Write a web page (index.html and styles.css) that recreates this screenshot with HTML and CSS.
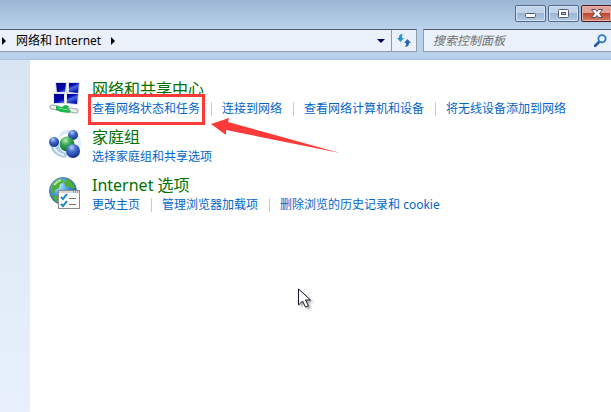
FILE: index.html
```html
<!DOCTYPE html>
<html lang="zh-CN">
<head>
<meta charset="utf-8">
<title>网络和 Internet</title>
<link rel="stylesheet" href="styles.css">
</head>
<body>
<div class="window">
  <header class="frame">
    <div class="titlebar">
      <button class="caption" type="button" aria-label="最小化">
        <svg width="29" height="15" viewBox="0 0 29 15"><rect x="9.500" y="7.500" width="10" height="4" rx="1" fill="#fff" stroke="#555b6b"/></svg>
      </button>
      <button class="caption" type="button" aria-label="最大化">
        <svg width="29" height="15" viewBox="0 0 29 15"><rect x="9.500" y="3.500" width="10" height="8" rx="1" fill="#fff" stroke="#555b6b"/><rect x="12.500" y="6.500" width="4" height="2" fill="#a6bfdc" stroke="#555b6b"/></svg>
      </button>
      <button class="caption close" type="button" aria-label="关闭">
        <svg width="29" height="15" viewBox="0 0 29 15"><path d="M9.500 3.500h4l1.500 2 1.500-2h4l-3 4 3 4h-4l-1.500-2-1.500 2h-4l3-4z" fill="#fff" stroke="#5a4a5c"/></svg>
      </button>
    </div>
    <div class="toolbar">
      <nav class="address">
        <svg class="tri" width="4" height="8" viewBox="0 0 4 8"><path d="M0 0l4 4-4 4z"/></svg>
        <a class="crumb" href="#">网络和 Internet</a>
        <svg class="tri" width="4" height="8" viewBox="0 0 4 8"><path d="M0 0l4 4-4 4z"/></svg>
        <button class="tool drop" type="button" aria-label="以前的位置">
          <svg width="8" height="4" viewBox="0 0 8 4"><path d="M0 0h8L4 4z" fill="#00005a"/></svg>
        </button>
        <button class="tool refresh" type="button" aria-label="刷新">
          <svg width="14" height="13" viewBox="0 0 14 13"><path d="M6 0C3 0 2 1 2 4H0l3.500 4L7 4H5c0-2 0-3 1-4z" fill="#2496d2"/><path d="M8 13c3 0 4-2 4-4h2l-3.500-4L7 9h2c0 2 0 3-1 4z" fill="#2c64b2"/></svg>
        </button>
      </nav>
      <div class="search">
        <input type="text" placeholder="搜索控制面板" aria-label="搜索控制面板">
        <button class="tool find" type="button" aria-label="搜索">
          <svg width="13" height="13" viewBox="0 0 13 13" fill="none"><path d="M1 12l4-4" stroke="#24579f" stroke-width="2.500" stroke-linecap="round"/><circle cx="8" cy="4.800" r="3.600" fill="#eaf6ff" stroke="#2b78cb" stroke-width="1.800"/></svg>
        </button>
      </div>
    </div>
  </header>
  <div class="body">
    <aside class="sidebar"></aside>
    <main class="content">
      <section class="category">
        <svg class="icon" width="34" height="36" viewBox="0 0 34 36">
          <defs><linearGradient id="screen" x1="0" y1="0" x2="1" y2="1"><stop offset="0" stop-color="#00008c"/><stop offset=".45" stop-color="#0404b4"/><stop offset=".6" stop-color="#4468e0"/><stop offset=".85" stop-color="#0c1cb0"/><stop offset="1" stop-color="#060f98"/></linearGradient></defs>
          <path d="M7 3h12v11l-11 1zM20 3h12l-1 12H19zM5 14l12 0v11H6zM18 14h13l-1 12-12-1z" fill="#dde0e6"/>
          <path d="M8 4h10l-1 9-8 0zM21 4h10l-1 10-9-1z" fill="url(#screen)"/>
          <path d="M6 15l10 0v9H6zM19 15h11l-1 10-10-1z" fill="url(#screen)"/>
          <path d="M4 28l6 1M22 31l6 1" stroke="#a0a6a6" stroke-width="5" stroke-linecap="round"/>
          <path d="M4 28l6 1M23 31l5 1" stroke="#eceeee" stroke-width="3" stroke-linecap="round"/>
          <path d="M8 27l6 1 3-2 4 1-1 3 3 2-2 2-8-1-5-2z" fill="#17b64a"/><path d="M10 29l10 2" stroke="#7be097"/>
        </svg>
        <div class="text">
          <h2>网络和共享中心</h2>
          <ul class="links">
            <li><a class="marked" href="#">查看网络状态和任务<svg class="pointer" width="130" height="35" viewBox="0 0 130 35"><path d="M1 6L19 0l-1 4L130 35 16 12v5z" fill="#fc3a38"/></svg></a></li>
            <li><a href="#">连接到网络</a></li>
            <li><a href="#">查看网络计算机和设备</a></li>
            <li><a href="#">将无线设备添加到网络</a></li>
          </ul>
        </div>
      </section>
      <section class="category">
        <svg class="icon" width="34" height="34" viewBox="0 0 34 34">
          <defs>
            <radialGradient id="blue" cx=".4" cy=".25" r=".75"><stop offset="0" stop-color="#b7d2fa"/><stop offset=".4" stop-color="#4770cd"/><stop offset="1" stop-color="#102d8e"/></radialGradient>
            <radialGradient id="green" cx=".4" cy=".25" r=".75"><stop offset="0" stop-color="#b8efb5"/><stop offset=".45" stop-color="#36a450"/><stop offset="1" stop-color="#087129"/></radialGradient>
          </defs>
          <path d="M11 9C13 4 17 2 22 3l-2 4C16 7 13 8 12 12zM29 7c5 5 5 11 2 16l-3-3c2-3 3-6 0-11z" fill="#dcecf8"/>
          <path d="M2 17c1 8 7 13 16 14l1-5c-6-1-8-5-9-12z" fill="#a9cbe8"/><path d="M6 20c2 5 5 7 10 8" stroke="#e6f4ff" stroke-width="2" fill="none"/>
          <circle cx="6" cy="15" r="5" fill="url(#blue)"/><circle cx="25" cy="8" r="5" fill="url(#blue)"/>
          <circle cx="19" cy="17" r="7.500" fill="url(#green)"/><circle cx="25" cy="24" r="7" fill="url(#blue)"/>
        </svg>
        <div class="text">
          <h2>家庭组</h2>
          <ul class="links">
            <li><a href="#">选择家庭组和共享选项</a></li>
          </ul>
        </div>
      </section>
      <section class="category">
        <svg class="icon" width="34" height="34" viewBox="0 0 34 34">
          <defs><radialGradient id="sea" cx=".35" cy=".3" r=".75"><stop offset="0" stop-color="#b9e7ff"/><stop offset=".5" stop-color="#3c93d8"/><stop offset="1" stop-color="#164a9c"/></radialGradient></defs>
          <circle cx="15" cy="16" r="13.500" fill="url(#sea)" stroke="#527f9e"/>
          <path d="M4 11C6 6 10 4 14 4l2 3-4 2-1 4-4 2-1 4-3-2zM18 4c5 1 8 5 9 9l-3 1-3-3-3 1-2-4zM4 20l6 1 3 4-2 3c-4-1-6-5-7-8z" fill="#4fae35"/>
          <path d="M6 10c2-3 4-4 7-5" stroke="#bbe99a" stroke-width="2" fill="none"/>
          <rect x="10.500" y="15.500" width="21" height="18" fill="#fbfbfc" stroke="#8c8c90"/>
          <path d="M11 17h20" stroke="#d6d8dc" stroke-width="2"/><path d="M25 17h1M27 17h1M29 17h1" stroke="#666"/>
          <path d="M13 22l2 2 4-5M13 29l2 2 4-5" fill="none" stroke="#1786c8" stroke-width="2"/>
          <path d="M21 23.500h7M21 29.500h7" stroke="#77777c"/>
        </svg>
        <div class="text">
          <h2>Internet 选项</h2>
          <ul class="links">
            <li><a href="#">更改主页</a></li>
            <li><a href="#">管理浏览器加载项</a></li>
            <li><a href="#">删除浏览的历史记录和 cookie</a></li>
          </ul>
        </div>
      </section>
    </main>
  </div>
  <svg class="cursor" width="17" height="22" viewBox="0 0 17 22"><path d="M1.500 1v16l4-4 3 6 3-1-3-6h5z" fill="#fff" stroke="#14172c"/></svg>
</div>
</body>
</html>
```

FILE: styles.css
```css
* {
  box-sizing: border-box;
}

body {
  margin: 0;
  font-family: "Noto Sans", "Noto Sans CJK SC", sans-serif;
  font-size: 12px;
  line-height: 18px;
  color: #000;
}

svg {
  display: block;
  flex: none;
}

button {
  margin: 0;
  padding: 0;
  border: 0;
  background: none;
}

a {
  color: #0066cc;
  text-decoration: none;
}

.window {
  position: relative;
  display: flex;
  flex-direction: column;
  min-height: 100vh;
  overflow: hidden;
}

.frame {
  padding-bottom: 7px;
  border-bottom: 1px solid #a5c0df;
  background: linear-gradient(#9cb7d5, #b9d1ea 28px, #b9d1ea);
}

.titlebar {
  display: flex;
  justify-content: flex-end;
  gap: 2px;
  height: 29px;
  padding-top: 5px;
}

.caption {
  width: 31px;
  height: 17px;
  border: 1px solid #52698a;
  border-radius: 2px;
  background: linear-gradient(#c0d3e9 50%, #9bb5d3 50%, #b4cce6);
  box-shadow: inset 0 0 0 1px #d5e4f4;
}

.close {
  margin-right: -1px;
  border-color: #4c1722;
  background: linear-gradient(#e0a298 45%, #bd3f2b 45%, #d58069);
  box-shadow: inset 0 0 0 1px #e8b2a8;
}

.toolbar {
  display: flex;
  gap: 6px;
}

.address,
.search {
  display: flex;
  align-items: center;
  height: 23px;
  border: 1px solid #8d9bab;
  border-top-color: #555e69;
  background: #eaf1fa;
}

.address {
  flex: 1;
  gap: 10px;
  padding-left: 2px;
  border-left: 0;
}

.crumb {
  color: #000;
}

.tool {
  display: flex;
  align-items: center;
  justify-content: center;
  align-self: stretch;
}

.drop {
  width: 20px;
  margin-left: auto;
}

.refresh {
  width: 25px;
  margin-left: -10px;
  border-left: 1px solid #8d9bab;
}

.search {
  flex: none;
  width: 188px;
  padding: 0 4px 0 9px;
  border-right: 0;
}

.search input {
  flex: 1;
  width: 0;
  min-width: 0;
  padding: 0;
  border: 0;
  outline: 0;
  background: none;
  font: inherit;
}

.search input::placeholder {
  color: #6d6d6d;
  font-style: italic;
  opacity: 1;
}

.body {
  display: flex;
  flex: 1;
}

.sidebar {
  flex: none;
  width: 30px;
  background: linear-gradient(#dae5f3, #e7f0fc);
}

.content {
  display: flex;
  flex: 1;
  flex-direction: column;
  gap: 9px;
  padding: 19px 18px;
  background: #fff;
}

.category {
  display: flex;
  gap: 10px;
}

h2 {
  margin: 0;
  font-size: 16px;
  font-weight: 400;
  line-height: 21px;
  color: #007000;
}

.links {
  display: flex;
  align-items: center;
  margin: 0;
  padding: 0;
  list-style: none;
  white-space: nowrap;
}

.links li + li {
  display: flex;
  align-items: center;
}

.links li + li::before {
  content: "";
  width: 1px;
  height: 14px;
  margin: 0 10px 0 11px;
  background: #ccc;
}

.marked {
  position: relative;
  display: block;
}

.marked::after {
  content: "";
  position: absolute;
  inset: -6px -5px -7px -4px;
  border: 3px solid #fc3a38;
}

.pointer {
  position: absolute;
  top: 18px;
  left: 118px;
}

.cursor {
  position: absolute;
  top: 288px;
  left: 297px;
  filter: drop-shadow(2px 2px 1px #0005);
}
```
